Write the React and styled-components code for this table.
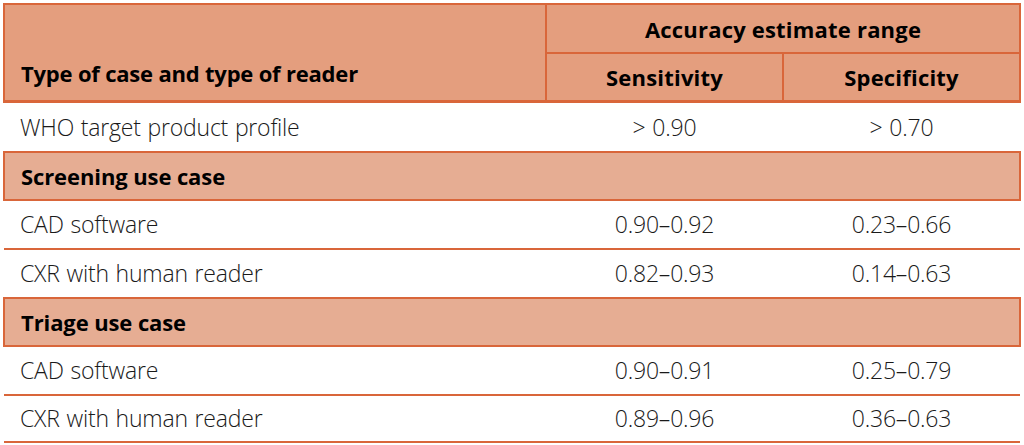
import { createGlobalStyle, styled } from "styled-components";

const GlobalStyle = createGlobalStyle`
    html, body {
        margin: 0;
        padding: 0;
        background: #ffffff;
    }
    body {
        font-family: "Open Sans", "Noto Sans", sans-serif;
    }
`;

const ORANGE = "#d9663a";

const Wrap = styled.div`
    width: 1024px;
    height: 445px;
    padding: 3px 5px 0 3px;
    box-sizing: border-box;
`;

const Table = styled.table`
    width: 1016px;
    border-collapse: collapse;
    table-layout: fixed;
    color: #1a1a1a;
`;

const HeadCell = styled.th`
    background: #e49e7e;
    border: 2px solid ${ORANGE};
    border-bottom-width: ${(p) => (p.$last ? "3px" : "2px")};
    font-size: 22px;
    font-weight: 700;
    color: #000;
    height: ${(p) => p.$h || 46}px;
    padding: 0 16px;
    text-align: ${(p) => (p.$left ? "left" : "center")};
    vertical-align: ${(p) => (p.$bottom ? "bottom" : "middle")};
    padding-bottom: ${(p) => (p.$bottom ? "12px" : "0")};
    letter-spacing: ${(p) => (p.$left ? "-0.2px" : "0.2px")};
`;

const Row = styled.tr`
    height: ${(p) => p.$h || 49}px;
    border-bottom: 2px solid ${ORANGE};
`;

const GroupRow = styled.tr`
    height: 48px;
    background: #e6ad93;
    border: 2px solid ${ORANGE};
`;

const Cell = styled.td`
    font-size: 23px;
    font-weight: 300;
    padding: 0 16px;
    text-align: ${(p) => (p.$center ? "center" : "left")};
    color: #1a1a1a;
    letter-spacing: -0.2px;
    word-spacing: 1px;
`;

const GroupCell = styled.td`
    font-size: 22px;
    font-weight: 700;
    color: #000;
    padding: 0 16px;
    letter-spacing: -0.1px;
`;

const rows = [
    { type: "row", label: "WHO target product profile", sens: "> 0.90", spec: "> 0.70", h: 50 },
    { type: "group", label: "Screening use case" },
    { type: "row", label: "CAD software", sens: "0.90–0.92", spec: "0.23–0.66" },
    { type: "row", label: "CXR with human reader", sens: "0.82–0.93", spec: "0.14–0.63" },
    { type: "group", label: "Triage use case" },
    { type: "row", label: "CAD software", sens: "0.90–0.91", spec: "0.25–0.79" },
    { type: "row", label: "CXR with human reader", sens: "0.89–0.96", spec: "0.36–0.63", h: 47 },
];

export default function App() {
    return (
        <Wrap>
            <GlobalStyle />
            <Table>
                <colgroup>
                    <col style={{ width: "542px" }} />
                    <col style={{ width: "237px" }} />
                    <col style={{ width: "237px" }} />
                </colgroup>
                <thead>
                    <tr>
                        <HeadCell rowSpan={2} $left $bottom $last>
                            Type of case and type of reader
                        </HeadCell>
                        <HeadCell colSpan={2} $h={47}>
                            Accuracy estimate range
                        </HeadCell>
                    </tr>
                    <tr>
                        <HeadCell $last $h={46}>Sensitivity</HeadCell>
                        <HeadCell $last $h={46}>Specificity</HeadCell>
                    </tr>
                </thead>
                <tbody>
                    {rows.map((r, i) =>
                        r.type === "group" ? (
                            <GroupRow key={i}>
                                <GroupCell colSpan={3}>{r.label}</GroupCell>
                            </GroupRow>
                        ) : (
                            <Row key={i} $h={r.h}>
                                <Cell>{r.label}</Cell>
                                <Cell $center>{r.sens}</Cell>
                                <Cell $center>{r.spec}</Cell>
                            </Row>
                        )
                    )}
                </tbody>
            </Table>
        </Wrap>
    );
}
